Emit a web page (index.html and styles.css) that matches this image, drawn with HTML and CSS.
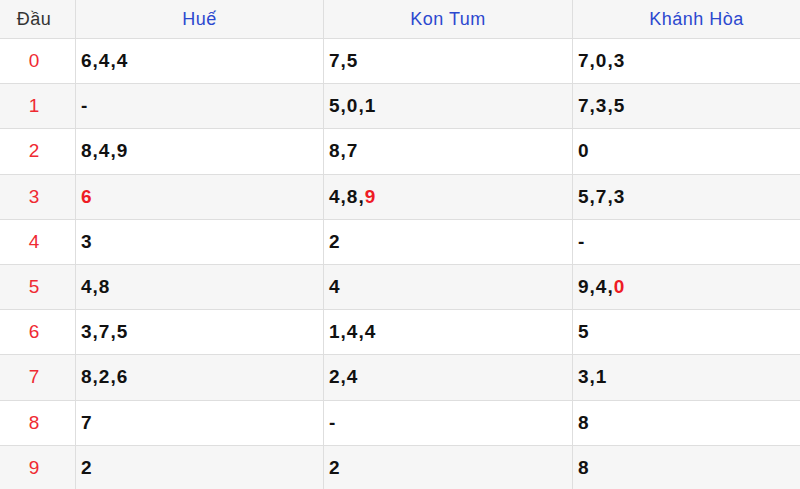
FILE: index.html
```html
<!DOCTYPE html>
<html lang="vi">
<head>
<meta charset="utf-8">
<link rel="stylesheet" href="styles.css">
</head>
<body>
<table class="loto">
  <colgroup>
    <col class="c-head">
    <col class="c-prov">
    <col class="c-prov2">
    <col class="c-prov">
  </colgroup>
  <thead>
    <tr class="hrow">
      <th class="dau">Đầu</th>
      <th class="prov">Huế</th>
      <th class="prov">Kon Tum</th>
      <th class="prov">Khánh Hòa</th>
    </tr>
  </thead>
  <tbody>
    <tr><td class="num">0</td><td>6,4,4</td><td>7,5</td><td>7,0,3</td></tr>
    <tr class="alt"><td class="num">1</td><td>-</td><td>5,0,1</td><td>7,3,5</td></tr>
    <tr><td class="num">2</td><td>8,4,9</td><td>8,7</td><td>0</td></tr>
    <tr class="alt"><td class="num">3</td><td><span class="hot">6</span></td><td>4,8,<span class="hot">9</span></td><td>5,7,3</td></tr>
    <tr><td class="num">4</td><td>3</td><td>2</td><td>-</td></tr>
    <tr class="alt"><td class="num">5</td><td>4,8</td><td>4</td><td>9,4,<span class="hot">0</span></td></tr>
    <tr><td class="num">6</td><td>3,7,5</td><td>1,4,4</td><td>5</td></tr>
    <tr class="alt"><td class="num">7</td><td>8,2,6</td><td>2,4</td><td>3,1</td></tr>
    <tr><td class="num">8</td><td>7</td><td>-</td><td>8</td></tr>
    <tr class="alt"><td class="num">9</td><td>2</td><td>2</td><td>8</td></tr>
  </tbody>
</table>
</body>
</html>
```
FILE: styles.css
```css
html, body {
  margin: 0;
  padding: 0;
  background: #ffffff;
  overflow: hidden;
}

body {
  font-family: "Liberation Sans", Arial, sans-serif;
}

.loto {
  border-collapse: collapse;
  table-layout: fixed;
  width: 828px;
  margin: -1px 0 0 -8px;
}

.c-head { width: 83px; }
.c-prov { width: 248px; }
.c-prov2 { width: 249px; }

.loto th,
.loto td {
  border: 1px solid #dedede;
  padding: 0 5px;
  vertical-align: middle;
}

.hrow {
  height: 39px;
  background: #f6f6f6;
}

.hrow th {
  font-size: 18px;
  font-weight: normal;
  letter-spacing: 0.5px;
  text-align: center;
}

.hrow .dau {
  color: #333333;
}

.hrow .prov {
  color: #2c48cf;
}

.loto tbody tr {
  height: 45.2px;
}

.loto tbody tr.alt {
  background: #f6f6f6;
}

.loto td {
  font-size: 19px;
  font-weight: bold;
  letter-spacing: 1px;
  color: #111111;
  text-align: left;
}

.loto td.num {
  font-weight: normal;
  color: #ef2a32;
  text-align: center;
  letter-spacing: 0;
}

.hot {
  color: #ee1c25;
}
```
